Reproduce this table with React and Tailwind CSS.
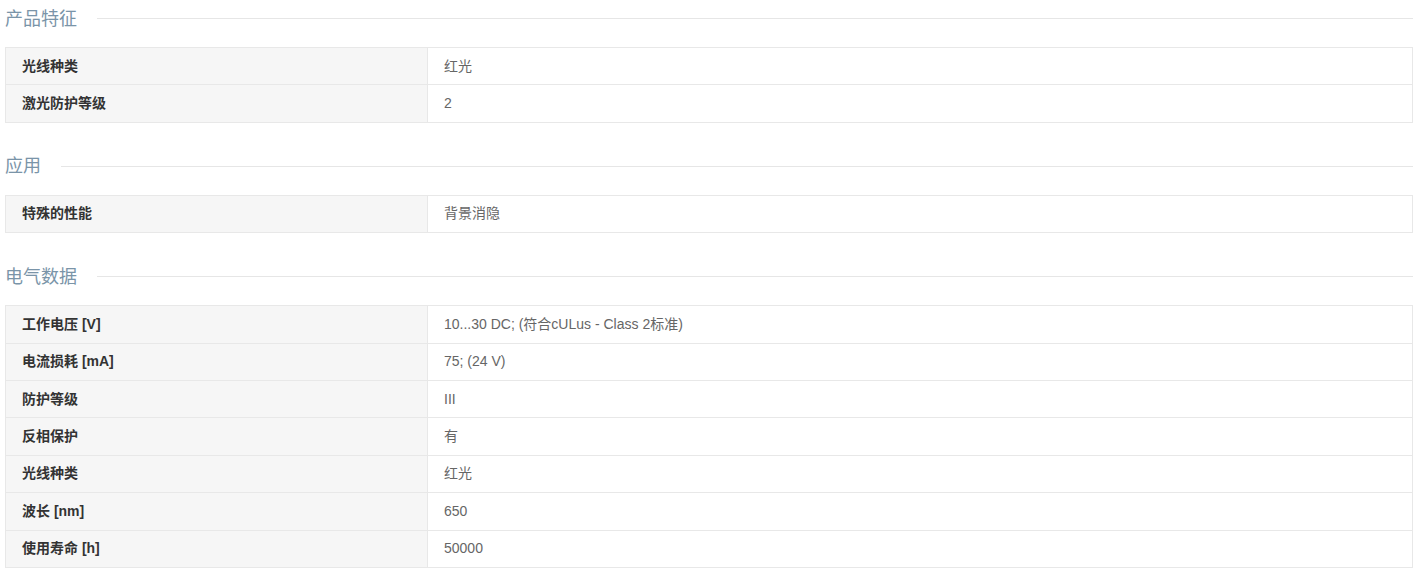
export default function App() {
  const sections = [
    {
      title: "产品特征",
      rows: [
        ["光线种类", "红光"],
        ["激光防护等级", "2"],
      ],
    },
    {
      title: "应用",
      rows: [["特殊的性能", "背景消隐"]],
    },
    {
      title: "电气数据",
      rows: [
        ["工作电压 [V]", "10...30 DC; (符合cULus - Class 2标准)"],
        ["电流损耗 [mA]", "75; (24 V)"],
        ["防护等级", "III"],
        ["反相保护", "有"],
        ["光线种类", "红光"],
        ["波长 [nm]", "650"],
        ["使用寿命 [h]", "50000"],
      ],
    },
  ];
  return (
    <div
      className="bg-white w-[1419px] h-[573px] overflow-hidden pl-[5px] pr-[6px] flex flex-col gap-[25px]"
      style={{ fontFamily: '"Liberation Sans", "Noto Sans CJK SC", sans-serif' }}
    >
      {sections.map((s) => (
        <div key={s.title} className="flex flex-col">
          <div className="h-[37px] flex items-center gap-5">
            <span className="text-[18px] leading-none text-[#7a94a8] whitespace-nowrap">{s.title}</span>
            <div className="flex-1 h-px bg-[#e6e6e6]" />
          </div>
          <div className="mt-[10px] border-x border-b border-[#e8e8e8]">
            {s.rows.map(([k, v], i) => (
              <div
                key={i}
                className="grid grid-cols-[422px_1fr] h-[37.4px] border-t border-[#e8e8e8]"
              >
                <div className="bg-[#f6f6f6] border-r border-[#e8e8e8] pl-4 flex items-center text-[14px] font-bold text-[#333]">
                  {k}
                </div>
                <div className="pl-4 flex items-center text-[14px] text-[#666]">{v}</div>
              </div>
            ))}
          </div>
        </div>
      ))}
    </div>
  );
}
